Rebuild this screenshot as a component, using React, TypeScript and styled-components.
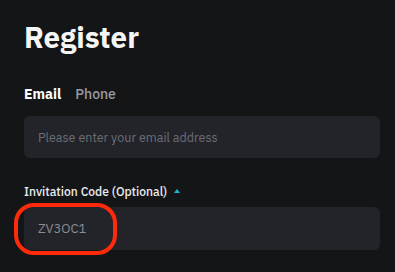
import React from "react";
import styled, { createGlobalStyle } from "styled-components";

const Global = createGlobalStyle`
  html, body { margin: 0; padding: 0; background: #141517; }
  body { font-family: "IBM Plex Sans", Inter, "Noto Sans", sans-serif; }
`;

const Page = styled.div`
  width: 395px;
  height: 272px;
  box-sizing: border-box;
  padding: 19px 15px 0 24px;
  background: #141517;
  display: flex;
  flex-direction: column;
  overflow: hidden;
`;

const Title = styled.h1`
  margin: 0;
  font-size: 29.5px;
  line-height: 36px;
  font-weight: 700;
  color: #f5f5f5;
`;

const Tabs = styled.div`
  display: flex;
  gap: 14px;
  margin-top: 30px;
`;

const Tab = styled.span<{ $active?: boolean }>`
  font-size: 14px;
  line-height: 18px;
  font-weight: ${(p) => (p.$active ? 700 : 500)};
  color: ${(p) => (p.$active ? "#ffffff" : "#9a9ca3")};
`;

const Field = styled.div`
  position: relative;
  height: 42px;
  border-radius: 6px;
  background: #23242a;
  display: flex;
  align-items: center;
  padding-left: 14px;
  font-size: 12.5px;
  color: #6c6e76;
`;

const FirstField = styled(Field)`
  margin-top: 13px;
`;

const CodeField = styled(Field)`
  margin-top: 6px;
  height: 43px;
  color: #8b8d94;
  font-size: 13px;
`;

const Label = styled.div`
  margin-top: 25px;
  display: flex;
  align-items: center;
  gap: 7px;
  font-size: 12.1px;
  line-height: 18px;
  font-weight: 500;
  color: #eaecef;
`;

const Caret = styled.span`
  width: 0;
  height: 0;
  border-left: 3px solid transparent;
  border-right: 3px solid transparent;
  border-bottom: 4px solid #1cb8d0;
  margin-top: -2px;
`;

const Highlight = styled.div`
  position: absolute;
  left: -10px;
  top: -4px;
  width: 95px;
  height: 44px;
  border: 4px solid #ff2a0c;
  border-radius: 20px;
  pointer-events: none;
`;

export default function App() {
  return (
    <>
      <Global />
      <Page>
        <Title>Register</Title>
        <Tabs>
          <Tab $active>Email</Tab>
          <Tab>Phone</Tab>
        </Tabs>
        <FirstField>Please enter your email address</FirstField>
        <Label>
          Invitation Code (Optional)
          <Caret />
        </Label>
        <CodeField>
          ZV3OC1
          <Highlight />
        </CodeField>
      </Page>
    </>
  );
}
